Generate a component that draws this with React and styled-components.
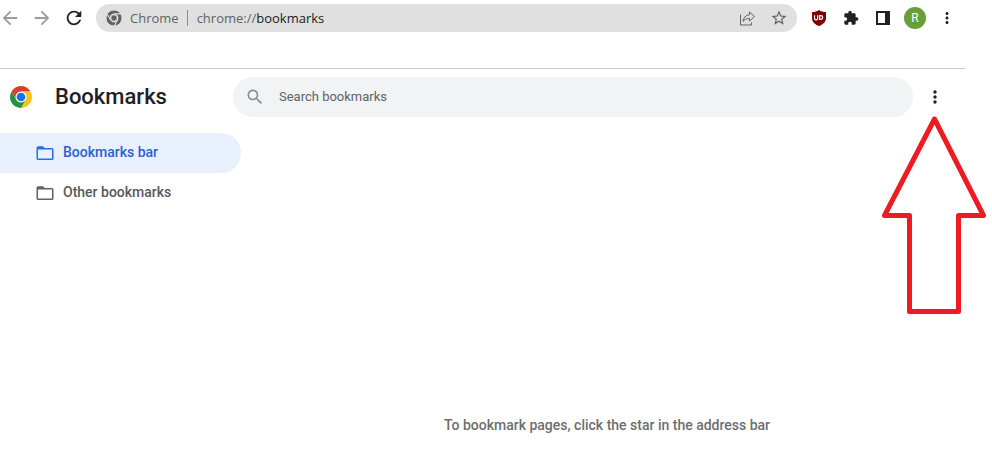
import React from 'react';
import styled, { createGlobalStyle } from 'styled-components';

const GlobalStyle = createGlobalStyle`
  *, *::before, *::after { box-sizing: border-box; }
  body {
    margin: 0;
    background: #fff;
    color: #202124;
    font-family: Roboto, "Liberation Sans", sans-serif;
    font-size: 13px;
  }
`;

const Page = styled.div`
  display: flex;
  flex-direction: column;
  min-height: 100vh;
`;

const BrowserBar = styled.header`
  display: flex;
  align-items: center;
  gap: 12px;
  padding: 4px 35px 36px 0;
`;

const IconButton = styled.button`
  display: flex;
  flex: none;
  align-items: center;
  justify-content: center;
  width: 20px;
  height: 20px;
  padding: 0;
  border: 0;
  background: none;
  color: ${(p) => p.$color || '#202124'};
`;

const AddressBar = styled.div`
  display: flex;
  flex: 1;
  align-items: center;
  min-width: 0;
  height: 28px;
  padding: 0 8px 0 10px;
  border-radius: 14px;
  background: #e0e0e0;
  color: #5f6368;
  font-family: "Open Sans", "Noto Sans", sans-serif;
  font-size: 13px;
`;

const SiteName = styled.span`
  margin-left: 8px;
  padding-right: 8px;
  border-right: 1px solid #8c8f93;
  line-height: 16px;
`;

const Address = styled.span`
  flex: 1;
  padding-left: 9px;
`;

const Host = styled.span`
  color: #202124;
`;

const AddressActions = styled.div`
  display: flex;
  gap: 12px;
`;

const Avatar = styled.button`
  flex: none;
  width: 22px;
  height: 22px;
  margin: 0 -1px;
  padding: 0;
  border: 0;
  border-radius: 50%;
  background: #689f38;
  color: #fff;
  font: 12px/22px Roboto, sans-serif;
`;

const Manager = styled.div`
  display: flex;
  flex: 1;
  flex-direction: column;
  margin-right: 27px;
  border-top: 1px solid #c8c8c8;
`;

const Toolbar = styled.div`
  display: flex;
  align-items: center;
  gap: 12px;
  padding: 8px 20px 16px 10px;
`;

const Brand = styled.div`
  display: flex;
  flex: none;
  align-items: center;
  gap: 23px;
  width: 211px;
`;

const Title = styled.h1`
  margin: 0;
  font-size: 22px;
  font-weight: 500;
  line-height: 28px;
`;

const SearchBox = styled.label`
  display: flex;
  flex: 1;
  align-items: center;
  gap: 14px;
  height: 40px;
  padding: 0 12px;
  border-radius: 20px;
  background: #f1f3f4;
  color: #8b8d90;
`;

const SearchInput = styled.input`
  flex: 1;
  min-width: 0;
  padding: 0;
  border: 0;
  outline: 0;
  background: none;
  color: #202124;
  font: 13px/20px Roboto, sans-serif;
  &::placeholder { color: #5f6368; opacity: 1; }
`;

const MenuAnchor = styled.div`
  position: relative;
`;

const Pointer = styled.svg`
  position: absolute;
  top: 28px;
  left: -44px;
  pointer-events: none;
`;

const Body = styled.div`
  display: flex;
  flex: 1;
`;

const Sidebar = styled.nav`
  flex: none;
  width: 241px;
`;

const Folder = styled.a`
  display: flex;
  align-items: center;
  gap: 8px;
  height: 40px;
  padding-left: 35px;
  border-radius: 0 20px 20px 0;
  background: ${(p) => (p.$active ? '#e8f0fe' : 'transparent')};
  color: ${(p) => (p.$active ? '#2a62cf' : '#56595d')};
  font-size: 14px;
  font-weight: 500;
  line-height: 18px;
  text-decoration: none;
  svg { color: ${(p) => (p.$active ? '#1a73e8' : '#5f6368')}; }
`;

const FolderName = styled.span`
  padding-bottom: 2px;
`;

const EmptyState = styled.main`
  display: flex;
  flex: 1;
  align-items: flex-end;
  justify-content: center;
  padding: 0 0 36px 8px;
  color: #6e6e6e;
  font-size: 14px;
  font-weight: 500;
  line-height: 20px;
`;

const Glyph = ({ d, size = 20, box = '0 0 24 24' }) => (
  <svg width={size} height={size} viewBox={box} fill="currentColor" fillRule="evenodd" aria-hidden="true">
    <path d={d} />
  </svg>
);

const paths = {
  back: 'M20 11H7.83l5.59-5.59L12 4l-8 8 8 8 1.41-1.41L7.83 13H20v-2z',
  forward: 'M12 4l-1.41 1.41L16.17 11H4v2h12.17l-5.58 5.59L12 20l8-8z',
  reload:
    'M17.65 6.35C16.2 4.9 14.21 4 12 4c-4.42 0-7.99 3.58-7.99 8s3.57 8 7.99 8c3.73 0 6.84-2.55 7.73-6h-2.08c-.82 2.33-3.04 4-5.65 4-3.31 0-6-2.69-6-6s2.69-6 6-6c1.66 0 3.14.69 4.22 1.78L13 11h7V4l-2.35 2.35z',
  star:
    'M22 9.24l-7.19-.62L12 2 9.19 8.63 2 9.24l5.46 4.73L5.82 21 12 17.27 18.18 21l-1.63-7.03L22 9.24zM12 15.4l-3.76 2.27 1-4.28-3.32-2.88 4.38-.38L12 6.1l1.71 4.04 4.38.38-3.32 2.88 1 4.28L12 15.4z',
  puzzle:
    'M20.5 11H19V7c0-1.1-.9-2-2-2h-4V3.5C13 2.12 11.88 1 10.5 1S8 2.12 8 3.5V5H4c-1.1 0-1.99.9-1.99 2v3.8H3.5c1.49 0 2.7 1.21 2.7 2.7s-1.21 2.7-2.7 2.7H2V20c0 1.1.9 2 2 2h3.8v-1.5c0-1.49 1.21-2.7 2.7-2.7 1.49 0 2.7 1.21 2.7 2.7V22H17c1.1 0 2-.9 2-2v-4h1.5c1.38 0 2.5-1.12 2.5-2.5S21.88 11 20.5 11z',
  panel: 'M3 3h14v14H3zM5 5v10h7V5z',
  more:
    'M12 8c1.1 0 2-.9 2-2s-.9-2-2-2-2 .9-2 2 .9 2 2 2zm0 2c-1.1 0-2 .9-2 2s.9 2 2 2 2-.9 2-2-.9-2-2-2zm0 6c-1.1 0-2 .9-2 2s.9 2 2 2 2-.9 2-2-.9-2-2-2z',
  search:
    'M15.5 14h-.79l-.28-.27C15.41 12.59 16 11.11 16 9.5 16 5.91 13.09 3 9.5 3S3 5.91 3 9.5 5.91 16 9.5 16c1.61 0 3.09-.59 4.23-1.57l.27.28v.79l5 4.99L20.49 19l-4.99-5zm-6 0C7.01 14 5 11.99 5 9.5S7.01 5 9.5 5 14 7.01 14 9.5 11.99 14 9.5 14z',
  folder:
    'M3 3.300h5L9.700 5H17a1.500 1.500 0 0 1 1.500 1.500v9A1.500 1.500 0 0 1 17 17H3a1.500 1.500 0 0 1-1.500-1.500V4.800A1.500 1.500 0 0 1 3 3.300zM3 6.500v9h14v-9z',
};

const logoArcs = [
  'M24 12H44.78a24 24 0 0 0-41.56 0L13.61 30A12 12 0 0 1 24 12Z',
  'M34.39 30 24 48A24 24 0 0 0 44.78 12H24A12 12 0 0 1 34.39 30Z',
  'M13.61 30 3.22 12A24 24 0 0 0 24 48L34.39 30a12 12 0 0 1-20.78 0Z',
];

const ChromeLogo = () => (
  <svg width="22" height="22" viewBox="0 0 48 48" aria-hidden="true">
    <circle cx="24" cy="24" r="13" fill="#fff" />
    <path d={logoArcs[0]} fill="#e33b2e" />
    <path d={logoArcs[1]} fill="#fcc31e" />
    <path d={logoArcs[2]} fill="#229342" />
    <circle cx="24" cy="24" r="9.5" fill="#1a73e8" />
  </svg>
);

const ChromeMark = () => (
  <svg width="16" height="16" viewBox="0 0 48 48" aria-hidden="true">
    {logoArcs.map((d) => (
      <path key={d} d={d} fill="#5f6368" stroke="#e0e0e0" strokeWidth="3" />
    ))}
    <circle cx="24" cy="24" r="8" fill="#5f6368" />
  </svg>
);

const ShareIcon = () => (
  <svg width="20" height="20" viewBox="0 0 20 20" fill="none" stroke="currentColor" strokeLinejoin="round" aria-hidden="true">
    <path d="M3.500 6.500v10.500h11V14.500" />
    <path d="M12.500 4 17.500 8.500l-5 4.500v-2.500c-3 0-5 1-6.500 3 .3-3.700 2.500-6.300 6.500-6.800z" />
  </svg>
);

const ShieldIcon = () => (
  <svg width="20" height="20" viewBox="0 0 20 20" aria-hidden="true">
    <path d="M10 2c2 1.500 4.300 2 7 2v6c0 4-3 6.500-7 8-4-1.500-7-4-7-8V4c2.700 0 5-.5 7-2z" fill="#800000" />
    <path d="M5.500 7.200v3a1.600 1.600 0 0 0 3.200 0v-3M10.700 7.700v3.600h1.200a1.800 1.800 0 0 0 0-3.600z" fill="none" stroke="#fff" strokeWidth="1.200" />
  </svg>
);

const folders = [
  { name: 'Bookmarks bar', active: true },
  { name: 'Other bookmarks', active: false },
];

export default function App() {
  return (
    <Page>
      <GlobalStyle />
      <BrowserBar>
        <IconButton $color="#9c9c9c" aria-label="Back"><Glyph d={paths.back} box="1 1 22 22" /></IconButton>
        <IconButton $color="#9c9c9c" aria-label="Forward"><Glyph d={paths.forward} box="1 1 22 22" /></IconButton>
        <IconButton aria-label="Reload"><Glyph d={paths.reload} box="1 1 22 22" /></IconButton>
        <AddressBar>
          <ChromeMark />
          <SiteName>Chrome</SiteName>
          <Address>chrome://<Host>bookmarks</Host></Address>
          <AddressActions>
            <IconButton $color="#5f6368" aria-label="Share"><ShareIcon /></IconButton>
            <IconButton $color="#5f6368" aria-label="Bookmark this page"><Glyph d={paths.star} size={18} /></IconButton>
          </AddressActions>
        </AddressBar>
        <IconButton aria-label="Content blocker"><ShieldIcon /></IconButton>
        <IconButton aria-label="Extensions"><Glyph d={paths.puzzle} size={16} /></IconButton>
        <IconButton aria-label="Side panel"><Glyph d={paths.panel} box="0 0 20 20" /></IconButton>
        <Avatar aria-label="Profile">R</Avatar>
        <IconButton aria-label="Browser menu"><Glyph d={paths.more} size={18} /></IconButton>
      </BrowserBar>
      <Manager>
        <Toolbar>
          <Brand>
            <ChromeLogo />
            <Title>Bookmarks</Title>
          </Brand>
          <SearchBox>
            <Glyph d={paths.search} />
            <SearchInput type="search" aria-label="Search bookmarks" placeholder="Search bookmarks" />
          </SearchBox>
          <MenuAnchor>
            <IconButton aria-label="Bookmarks menu"><Glyph d={paths.more} /></IconButton>
            <Pointer width="108" height="202" viewBox="0 0 108 202" fill="none" stroke="#ed1c24" strokeWidth="5" strokeLinejoin="round" aria-hidden="true">
              <path d="M53.500 4 102.500 100.500H77.500V196.500H28.500V100.500H3.500Z" />
            </Pointer>
          </MenuAnchor>
        </Toolbar>
        <Body>
          <Sidebar>
            {folders.map((f) => (
              <Folder key={f.name} href="#" $active={f.active}>
                <Glyph d={paths.folder} box="0 0 20 20" />
                <FolderName>{f.name}</FolderName>
              </Folder>
            ))}
          </Sidebar>
          <EmptyState>To bookmark pages, click the star in the address bar</EmptyState>
        </Body>
      </Manager>
    </Page>
  );
}
